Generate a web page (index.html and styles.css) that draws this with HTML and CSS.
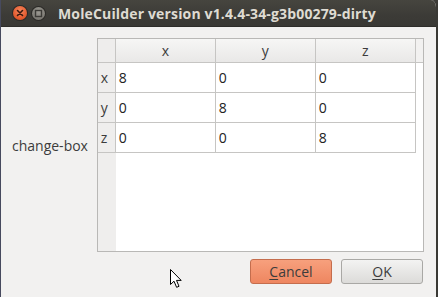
FILE: index.html
```html
<!DOCTYPE html>
<html>
<head>
<meta charset="utf-8">
<link rel="stylesheet" href="styles.css">
</head>
<body>
<div class="window">
  <div class="titlebar">
    <div class="wbtn close"><svg width="14" height="14" viewBox="0 0 14 14"><path d="M4.5 4.5 L9.5 9.5 M9.5 4.5 L4.5 9.5" stroke="#3a1a10" stroke-width="1.6" stroke-linecap="round"/></svg></div>
    <div class="wbtn mini"><svg width="13" height="13" viewBox="0 0 13 13"><rect x="3.5" y="3.5" width="6" height="6" fill="none" stroke="#3c3b37" stroke-width="1.4"/></svg></div>
    <div class="title">MoleCuilder version v1.4.4-34-g3b00279-dirty</div>
  </div>
  <div class="content">
    <div class="main">
      <div class="label">change-box</div>
      <div class="frame">
        <div class="grid">
          <div class="hcell corner"></div>
          <div class="hcell">x</div>
          <div class="hcell">y</div>
          <div class="hcell">z</div>
          <div class="hfill"></div>
          <div class="rhead">x</div><div class="cell">8</div><div class="cell">0</div><div class="cell">0</div>
          <div class="rhead">y</div><div class="cell">0</div><div class="cell">8</div><div class="cell">0</div>
          <div class="rhead">z</div><div class="cell">0</div><div class="cell">0</div><div class="cell">8</div>
        </div>
        <div class="rest">
          <div class="rest-head"></div>
          <div class="rest-body"></div>
        </div>
      </div>
    </div>
    <div class="buttons">
      <button class="btn cancel"><u>C</u>ancel</button>
      <button class="btn ok"><u>O</u>K</button>
    </div>
  </div>
  <svg class="cursor" width="13" height="20" viewBox="0 0 13 20"><path d="M0.5 0.5 L0.5 15.5 L4 12.2 L6.6 18.3 L9 17.3 L6.5 11.4 L11.2 11.4 Z" fill="#ffffff" stroke="#000000" stroke-width="1" stroke-linejoin="round"/></svg>
</div>
</body>
</html>
```
FILE: styles.css
```css
html, body {
  margin: 0;
  padding: 0;
  width: 438px;
  height: 297px;
  overflow: hidden;
  background: #3c3b37;
}
.window {
  position: relative;
  width: 438px;
  height: 297px;
  box-sizing: border-box;
  display: flex;
  flex-direction: column;
  background: #f2f1f0;
  border-left: 1px solid #474a5e;
  border-right: 2px solid #3a3935;
  border-top-right-radius: 7px;
  overflow: hidden;
  font-family: "Open Sans", "Noto Sans", sans-serif;
  font-size: 14px;
  color: #3c3c3c;
}
.titlebar {
  height: 27px;
  flex: none;
  display: flex;
  align-items: center;
  background: linear-gradient(#46453f, #3c3b37 60%, #393834);
  border-bottom: 1px solid #2e2d2a;
  box-sizing: border-box;
  padding-left: 12px;
}
.wbtn {
  border-radius: 50%;
  display: flex;
  align-items: center;
  justify-content: center;
}
.close {
  width: 14px;
  height: 14px;
  background: radial-gradient(circle at 50% 35%, #f7875d, #e2562a 70%, #c44416);
  box-shadow: 0 0 0 1px #2b2a27;
}
.mini {
  width: 13px;
  height: 13px;
  margin-left: 5px;
  background: radial-gradient(circle at 50% 35%, #9c9a93, #7a7872 75%);
  box-shadow: 0 0 0 1px #2b2a27;
}
.title {
  margin-left: 13px;
  color: #dfdbd2;
  font-weight: bold;
  font-size: 14px;
  letter-spacing: 0.15px;
  white-space: nowrap;
}
.content {
  flex: 1;
  display: flex;
  flex-direction: column;
  padding: 11px 12px 0 11px;
  gap: 7px;
}
.main {
  display: flex;
  align-items: center;
  gap: 7px;
}
.label {
  width: 78px;
  font-size: 14px;
  color: #3c3c3c;
  white-space: nowrap;
}
.frame {
  width: 328px;
  height: 214px;
  box-sizing: border-box;
  border: 1px solid #b9b8b6;
  background: #ffffff;
  display: flex;
  flex-direction: column;
  overflow: hidden;
  position: relative;
}
.grid {
  display: grid;
  grid-template-columns: 18px 100px 100px 100px 8px;
  grid-template-rows: 24px 30px 30px 30px;
  color: #222222;
}
.hcell {
  background: linear-gradient(#f6f6f5, #e9e8e7);
  border-right: 1px solid #c6c5c3;
  border-bottom: 1px solid #c6c5c3;
  display: flex;
  align-items: center;
  justify-content: center;
  color: #3c3c3c;
}
.hfill {
  background: #f2f1f0;
  border-bottom: 1px solid #c6c5c3;
}
.corner {
  background: #eeedec;
}
.rhead {
  grid-column: 1;
  background: #efeeed;
  border-right: 1px solid #c6c5c3;
  border-bottom: 1px solid #c6c5c3;
  display: flex;
  align-items: center;
  padding-left: 3px;
  color: #3c3c3c;
}
.cell {
  border-right: 1px solid #c6c5c3;
  border-bottom: 1px solid #c6c5c3;
  display: flex;
  align-items: center;
  padding-left: 3px;
  background: #ffffff;
}
.rhead + .cell + .cell + .cell {
  grid-column: 4;
}
.rest {
  flex: 1;
  display: flex;
}
.rest-head {
  width: 18px;
  background: #efeeed;
}
.rest-body {
  flex: 1;
  background: #ffffff;
}
.buttons {
  display: flex;
  justify-content: flex-end;
  gap: 9px;
  padding-right: 1px;
}
.btn {
  width: 82px;
  height: 25px;
  box-sizing: border-box;
  border-radius: 3px;
  font-family: "Open Sans", "Noto Sans", sans-serif;
  font-size: 14px;
  color: #3c3c3c;
  padding: 0;
}
.btn u {
  text-underline-offset: 2px;
}
.cancel {
  background: linear-gradient(#f7a07d, #ee8660);
  border: 1px solid #c46d4d;
}
.ok {
  background: linear-gradient(#f3f3f2, #dcdbd9);
  border: 1px solid #a9a8a5;
}
.cursor {
  position: absolute;
  left: 169px;
  top: 269px;
}
```
